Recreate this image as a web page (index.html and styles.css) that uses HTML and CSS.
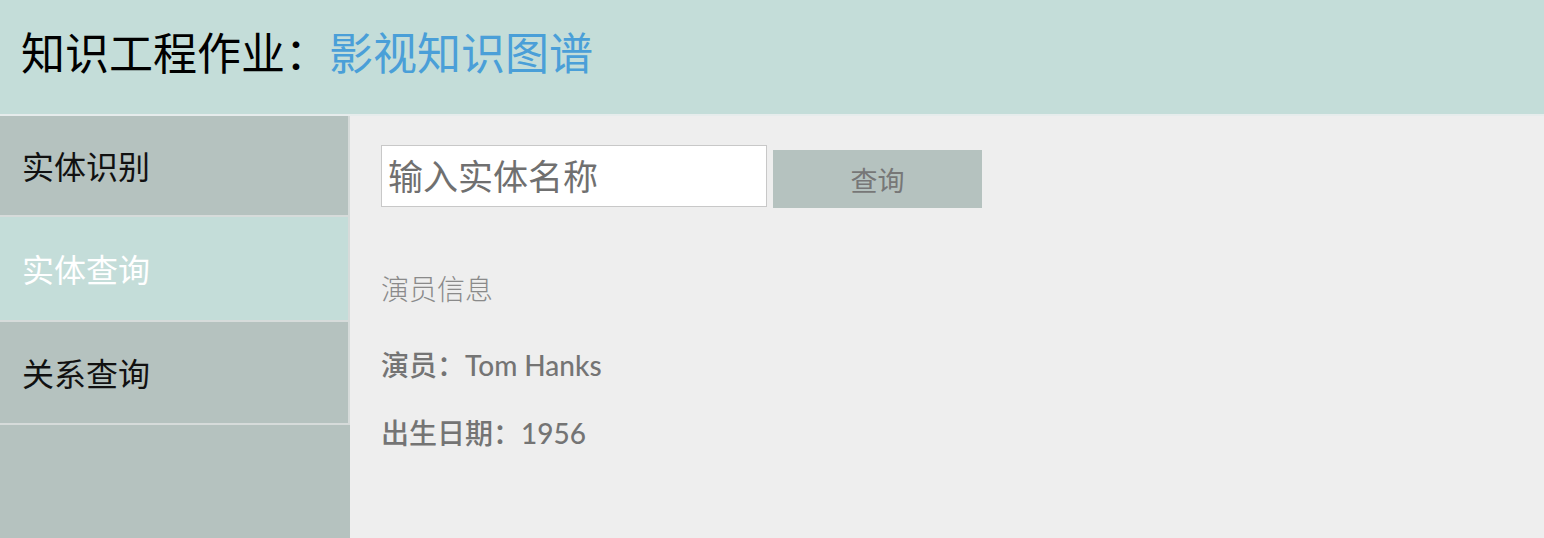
FILE: index.html
```html
<!DOCTYPE html>
<html lang="zh">
<head>
<meta charset="utf-8">
<title>知识工程作业：影视知识图谱</title>
<link rel="stylesheet" href="styles.css">
</head>
<body>
<header class="header">
  <h1 class="title">知识工程作业：<span class="title-accent">影视知识图谱</span></h1>
</header>
<div class="layout">
  <nav class="sidebar">
    <a class="nav-item">实体识别</a>
    <a class="nav-item active">实体查询</a>
    <a class="nav-item">关系查询</a>
  </nav>
  <main class="main">
    <div class="search">
      <input class="search-input" type="text" placeholder="输入实体名称">
      <button class="search-btn">查询</button>
    </div>
    <div class="section-title">演员信息</div>
    <div class="info-row">演员：Tom Hanks</div>
    <div class="info-row">出生日期：1956</div>
  </main>
</div>
</body>
</html>
```

FILE: styles.css
```css
* { box-sizing: border-box; }
html, body { margin: 0; padding: 0; height: 100%; }
body {
  font-family: Lato, "Noto Sans CJK SC", sans-serif;
  background: #eeeeee;
  overflow: hidden;
}
.header {
  height: 114px;
  background: #c4ddd9;
  border-bottom: 2px solid #e6ecec;
  box-sizing: content-box;
  display: flex;
  align-items: center;
  padding-left: 21px;
}
.title {
  margin: 0;
  font-weight: normal;
  font-size: 44px;
  color: #000;
  line-height: 1;
  position: relative;
  top: -4px;
}
.title-accent { color: #4a9fd8; }
.layout {
  display: flex;
  height: calc(100% - 116px);
}
.sidebar {
  width: 350px;
  flex: none;
  background: #b5c2bf;
  display: flex;
  flex-direction: column;
}
.nav-item {
  display: flex;
  align-items: center;
  height: 103px;
  padding-left: 22px;
  font-size: 32px;
  color: #111;
  border-right: 2px solid #d6dbda;
  border-bottom: 2px solid #d6dbda;
  padding-bottom: 2px;
}
.nav-item:first-child { height: 101px; }
.nav-item.active {
  background: #c4ddd9;
  color: #ffffff;
  height: 105px;
}
.main {
  flex: 1;
  padding: 29px 0 0 31px;
}
.search {
  display: flex;
  align-items: flex-start;
  gap: 6px;
}
.search-input {
  width: 386px;
  height: 62px;
  border: 1px solid #c8c8c8;
  background: #fff;
  font-family: Lato, "Noto Sans CJK SC", sans-serif;
  font-size: 35px;
  padding: 0 6px;
  color: #333;
  outline: none;
}
.search-input::placeholder { color: #707070; }
.search-btn {
  margin-top: 5px;
  width: 209px;
  height: 58px;
  border: none;
  background: #b5c2bf;
  color: #777;
  font-family: Lato, "Noto Sans CJK SC", sans-serif;
  font-size: 27px;
  padding: 0;
}
.section-title {
  margin-top: 63px;
  font-size: 28px;
  color: #8a8a8a;
  font-weight: 300;
  line-height: 36px;
}
.info-row {
  margin-top: 44px;
  font-size: 28px;
  color: #747474;
  font-weight: 500;
  line-height: 28px;
}
.info-row + .info-row { margin-top: 40px; }
```
